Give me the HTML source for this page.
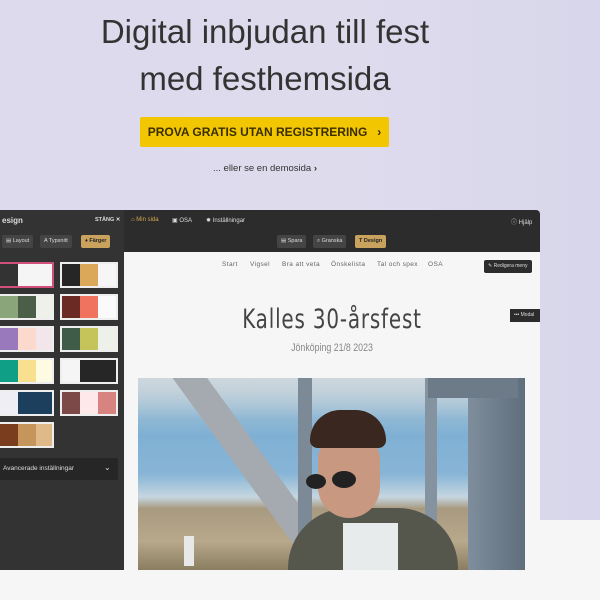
<!DOCTYPE html>
<html><head><meta charset="utf-8"><style>
*{margin:0;padding:0;box-sizing:border-box}
body{width:600px;height:600px;overflow:hidden;background:#f6f6f6;font-family:"Liberation Sans",sans-serif;position:relative}
.abs{position:absolute}
.bg{left:0;top:0;width:600px;height:520px;background:linear-gradient(90deg,#dcdaec,#dddbec 60%,#d8d6ea)}
h1{position:absolute;left:0;width:530px;text-align:center;font-weight:normal;font-size:33px;color:#333;line-height:40px}
.btn{left:140px;top:117px;width:249px;height:30px;background:#f2c600;color:#3a2e00;font-weight:bold;font-size:12px;line-height:30px;text-align:center;border-radius:2px;white-space:nowrap}
.demo{left:0;width:530px;top:163px;text-align:center;font-size:9.5px;color:#333}
.panel{left:0;top:210px;width:124px;height:360px;background:#333}
.top{left:124px;top:210px;width:416px;height:42px;background:#2c2c2c;border-radius:0 4px 0 0}
.content{left:124px;top:252px;width:416px;height:318px;background:#f6f6f6}
.t{font-size:6px;color:#ddd;white-space:nowrap}
.sw{position:absolute;height:26px;display:flex;border:2px solid #eee;background:#eee}
.sw div{height:100%}
.pill{position:absolute;height:13px;border-radius:2px;font-size:5.5px;line-height:13px;color:#ddd;background:#444;padding:0 4px;white-space:nowrap}
.nav{left:124px;width:416px;top:261px;font-size:6.5px;color:#666;letter-spacing:.4px;white-space:nowrap}
.nav span{position:absolute}
</style></head><body>
<div class="abs bg"></div>
<h1 style="top:12px">Digital inbjudan till fest</h1>
<h1 style="top:59px">med festhemsida</h1>
<div class="abs btn">PROVA GRATIS UTAN REGISTRERING &nbsp;&nbsp;›</div>
<div class="abs demo">... eller se en demosida <b>›</b></div>

<div class="abs panel"></div>
<div class="abs t" style="left:2px;top:216px;font-size:8px;font-weight:bold">esign</div>
<div class="abs t" style="left:95px;top:217px;font-size:5.5px;font-weight:bold">STÄNG ✕</div>
<div class="pill" style="left:2px;top:235px">▤ Layout</div>
<div class="pill" style="left:40px;top:235px">A Typsnitt</div>
<div class="pill" style="left:81px;top:235px;background:#c9a25e;color:#222;font-weight:bold">♦ Färger</div>

<div class="sw" style="left:-2px;top:262px;width:56px;border-color:#d0507a"><div style="width:18px;background:#333"></div><div style="flex:1;background:#f5f5f5"></div></div>
<div class="sw" style="left:60px;top:262px;width:58px"><div style="width:18px;background:#262626"></div><div style="width:18px;background:#dba85a"></div><div style="flex:1;background:#f6f6f6"></div></div>
<div class="sw" style="left:-2px;top:294px;width:56px"><div style="width:18px;background:#8aa57a"></div><div style="width:18px;background:#4a5e48"></div><div style="flex:1;background:#eef0ea"></div></div>
<div class="sw" style="left:60px;top:294px;width:58px"><div style="width:18px;background:#6b2a24"></div><div style="width:18px;background:#f07360"></div><div style="flex:1;background:#fafafa"></div></div>
<div class="sw" style="left:-2px;top:326px;width:56px"><div style="width:18px;background:#9a78bc"></div><div style="width:18px;background:#fbd9cc"></div><div style="flex:1;background:#f2e6ea"></div></div>
<div class="sw" style="left:60px;top:326px;width:58px"><div style="width:18px;background:#3e5c48"></div><div style="width:18px;background:#c4c45a"></div><div style="flex:1;background:#eef0ea"></div></div>
<div class="sw" style="left:-2px;top:358px;width:56px"><div style="width:18px;background:#0f9e86"></div><div style="width:18px;background:#f9e08e"></div><div style="flex:1;background:#fdfbe2"></div></div>
<div class="sw" style="left:60px;top:358px;width:58px"><div style="width:18px;background:#f5f5f5"></div><div style="flex:1;background:#262626"></div></div>
<div class="sw" style="left:-2px;top:390px;width:56px"><div style="width:18px;background:#eeeef4"></div><div style="flex:1;background:#1b3f5c"></div></div>
<div class="sw" style="left:60px;top:390px;width:58px"><div style="width:18px;background:#7c4848"></div><div style="width:18px;background:#ffe8ea"></div><div style="flex:1;background:#d78480"></div></div>
<div class="sw" style="left:-2px;top:422px;width:56px"><div style="width:18px;background:#7a3e1e"></div><div style="width:18px;background:#c5955c"></div><div style="flex:1;background:#dfb987"></div></div>
<div class="abs" style="left:0;top:458px;width:118px;height:22px;background:#262626"></div>
<div class="abs t" style="left:3px;top:465px;font-size:6.5px">Avancerade inställningar</div>
<div class="abs t" style="left:104px;top:463px;font-size:8px">⌄</div>

<div class="abs top"></div>
<div class="abs t" style="left:131px;top:217px;color:#d4a94f">⌂ Min sida</div>
<div class="abs t" style="left:172px;top:217px">▣ OSA</div>
<div class="abs t" style="left:206px;top:217px">✹ Inställningar</div>
<div class="abs t" style="left:511px;top:217px">ⓘ Hjälp</div>
<div class="pill" style="left:277px;top:235px;background:#444">▤ Spara</div>
<div class="pill" style="left:313px;top:235px;background:#444">⌕ Granska</div>
<div class="pill" style="left:355px;top:235px;background:#c9a25e;color:#222;font-weight:bold">T Design</div>
<div class="abs content"></div>
<div class="abs nav"><span style="left:98px">Start</span><span style="left:126px">Vigsel</span><span style="left:158px">Bra att veta</span><span style="left:207px">Önskelista</span><span style="left:253px">Tal och spex</span><span style="left:304px">OSA</span></div>
<div class="pill" style="left:484px;top:260px;background:#2c2c2c;font-size:5px">✎ Redigera meny</div>
<div class="pill" style="left:510px;top:309px;background:#2c2c2c;font-size:5px;width:30px;border-radius:0">••• Modal</div>
<div class="abs" style="left:124px;width:416px;top:304px;text-align:center;font-family:'DejaVu Sans Condensed','Liberation Sans Narrow',sans-serif;font-weight:200;font-size:27px;color:#444;letter-spacing:1px;transform:scaleX(.82)">Kalles 30-årsfest</div>
<div class="abs" style="left:124px;width:416px;top:342px;text-align:center;font-size:11px;color:#888;transform:scaleX(.8)">Jönköping 21/8 2023</div>

<div class="abs" style="left:138px;top:378px;width:387px;height:192px;overflow:hidden;background:linear-gradient(180deg,#b9cbd6 0%,#7fb0d4 30%,#88b5d6 50%,#c6d6e0 62%,#a89a80 68%,#b8a88c 85%,#8a7e60 100%)">
 <div class="abs" style="left:0;top:0;width:387px;height:40px;background:linear-gradient(180deg,#cdd7dd,rgba(200,215,225,0))"></div>
 <div class="abs" style="left:20px;top:-20px;width:28px;height:260px;background:#a5aab0;transform:rotate(-36deg);transform-origin:top left"></div>
 <div class="abs" style="left:160px;top:0;width:14px;height:192px;background:#7c8a98"></div>
 <div class="abs" style="left:287px;top:0;width:12px;height:192px;background:#8593a0"></div>
 <div class="abs" style="left:330px;top:0;width:57px;height:192px;background:linear-gradient(90deg,#7f8e9c,#5f6e7c)"></div>
 <div class="abs" style="left:290px;top:0;width:90px;height:20px;background:#6d7b88"></div>
 <div class="abs" style="left:150px;top:130px;width:170px;height:70px;background:#55574c;border-radius:60px 60px 0 0"></div>
 <div class="abs" style="left:205px;top:145px;width:55px;height:55px;background:#e8ebec"></div>
 <div class="abs" style="left:180px;top:55px;width:62px;height:85px;background:#c89880;border-radius:30px 30px 35px 35px"></div>
 <div class="abs" style="left:172px;top:32px;width:76px;height:38px;background:#3a2820;border-radius:40px 40px 10px 10px"></div>
 <div class="abs" style="left:168px;top:96px;width:20px;height:15px;background:#222;border-radius:50%"></div>
 <div class="abs" style="left:194px;top:93px;width:24px;height:17px;background:#222;border-radius:50%"></div>
 <div class="abs" style="left:46px;top:158px;width:10px;height:30px;background:#e8e8e8"></div>
</div>
</body></html>
